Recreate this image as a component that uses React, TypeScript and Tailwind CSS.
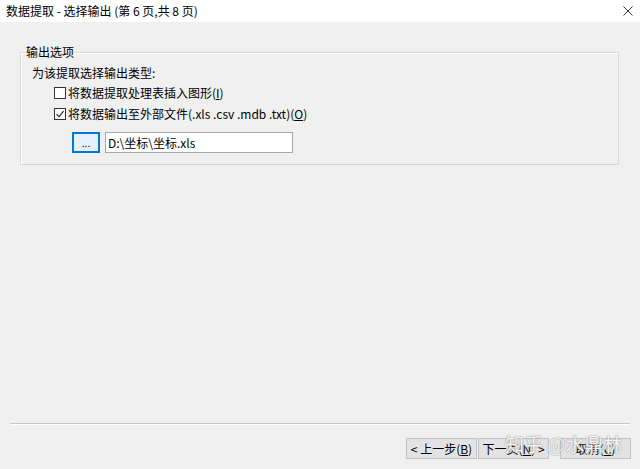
import React from 'react';

const font = { fontFamily: '"Noto Sans CJK SC", "Microsoft YaHei", sans-serif' };

const Checkbox: React.FC<{ checked?: boolean }> = ({ checked }) => (
  <span className="flex h-[12px] w-[12px] items-center justify-center border border-[#333] bg-white">
    {checked && (
      <svg width="10" height="10" viewBox="0 0 10 10">
        <path d="M1.5 5.2 L4 7.6 L8.6 2.2" fill="none" stroke="#222" strokeWidth="1.1" />
      </svg>
    )}
  </span>
);

const WinButton: React.FC<{ className?: string; children: React.ReactNode }> = ({ className, children }) => (
  <button className={`flex h-[21px] items-center justify-center border border-[#c3c3c3] bg-[#e3e3e3] text-[12px] leading-none text-black ${className ?? ''}`}>
    {children}
  </button>
);

export default function App() {
  return (
    <div className="relative flex h-[469px] w-[640px] flex-col overflow-hidden bg-[#f0f0f0] text-[12px] text-black" style={font}>
      {/* title bar */}
      <div className="flex h-[22px] items-center justify-between bg-white pl-[6px] pr-[7px]">
        <span className="leading-none">数据提取 - 选择输出 (第 6 页,共 8 页)</span>
        <svg width="10" height="10" viewBox="0 0 10 10">
          <path d="M0.5 0.5 L9.5 9.5 M9.5 0.5 L0.5 9.5" stroke="#333" strokeWidth="1" />
        </svg>
      </div>

      {/* group box */}
      <div className="relative ml-[20px] mr-[21px] mt-[30px] border border-[#d9d9d9] pb-[11px] pl-[11px] pt-[12px] shadow-[inset_1px_1px_0_#fff]">
        <span className="absolute -top-[9px] left-[4px] bg-[#f0f0f0] px-[1px] leading-[16px]">输出选项</span>
        <div className="leading-[16px]">为该提取选择输出类型:</div>
        <div className="ml-[22px] mt-[4px] flex h-[16px] items-center gap-[2px]">
          <Checkbox />
          <span className="leading-[16px]">
            将数据提取处理表插入图形(<span className="underline">I</span>)
          </span>
        </div>
        <div className="ml-[22px] mt-[5px] flex h-[16px] items-center gap-[2px]">
          <Checkbox checked />
          <span className="leading-[16px]">
            将数据输出至外部文件(.xls .csv .mdb .txt)(<span className="underline">O</span>)
          </span>
        </div>
        <div className="ml-[40px] mt-[10px] flex items-center gap-[5px]">
          <button className="flex h-[21px] w-[28px] items-end justify-center border-2 border-[#0078d7] bg-[#e5f1fb] pb-[3px] text-[10px] leading-none">
            ...
          </button>
          <div className="flex h-[21px] w-[188px] items-center border border-[#a9a9a9] bg-white pl-[2px] leading-none">
            D:\坐标\坐标.xls
          </div>
        </div>
      </div>

      <div className="flex-1" />

      {/* separator */}
      <div className="mx-[10px] h-[2px] border-b border-t border-b-white border-t-[#c8c8c8]" />

      {/* buttons */}
      <div className="mb-[10px] mt-[13px] flex justify-end pr-[9px]">
        <WinButton className="w-[71px]">
          &lt; 上一步(<span className="underline">B</span>)
        </WinButton>
        <WinButton className="ml-px w-[71px]">
          下一页(<span className="underline">N</span>) &gt;
        </WinButton>
        <WinButton className="ml-[11px] w-[71px]">
          取消(<span className="underline">C</span>)
        </WinButton>
      </div>

      {/* watermark */}
      <div className="pointer-events-none absolute left-[505px] top-[431px] whitespace-nowrap text-[19px] leading-[26px] text-white/90 [text-shadow:0_0_1px_#888,0_0_2px_#aaa]">
        知乎 @水鼎林
      </div>
    </div>
  );
}
